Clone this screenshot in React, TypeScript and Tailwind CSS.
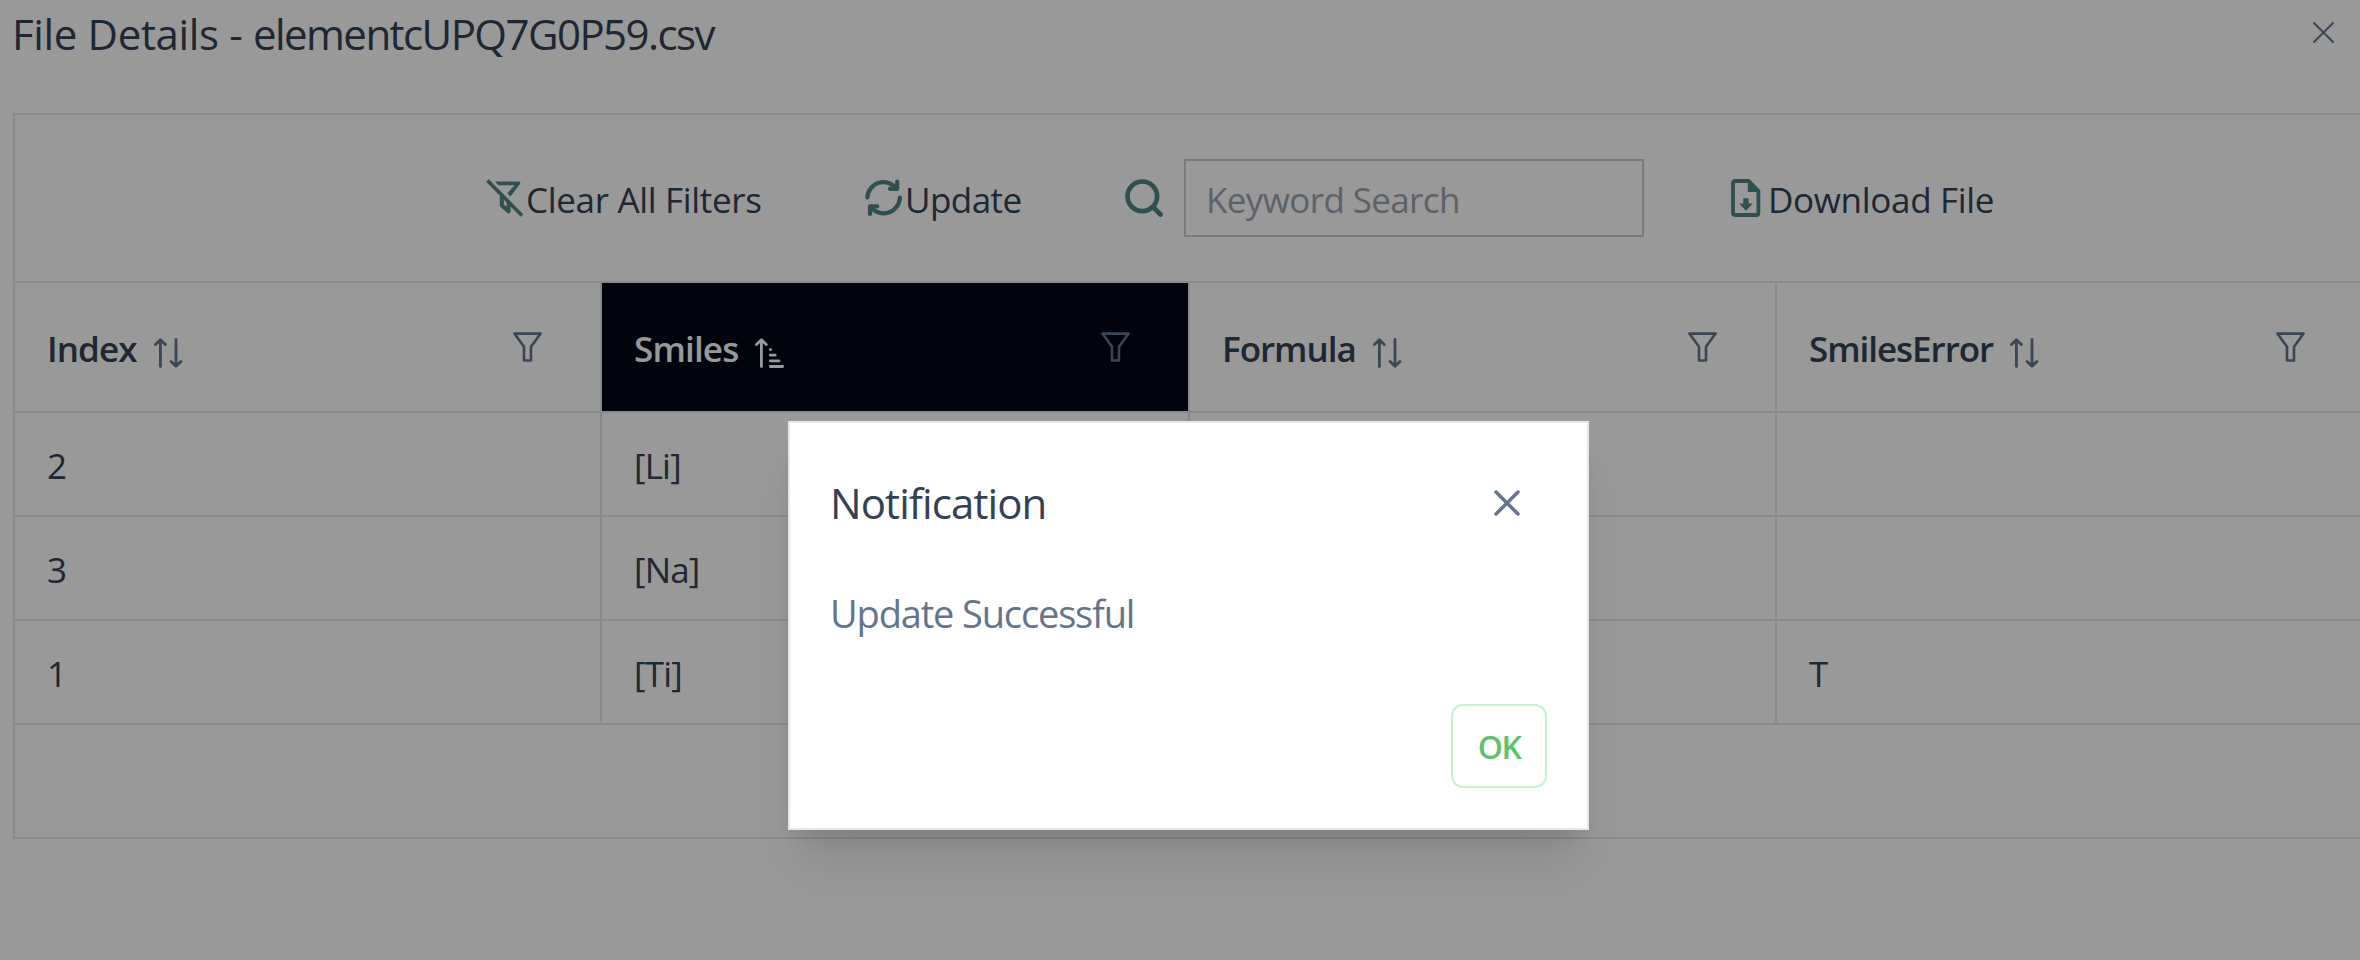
const columns = [
  { name: "Index", tracking: "tracking-[-0.9px]", sorted: false },
  { name: "Smiles", tracking: "tracking-[-0.82px]", sorted: true },
  { name: "Formula", tracking: "tracking-[-1px]", sorted: false },
  { name: "SmilesError", tracking: "tracking-[-1.04px]", sorted: false },
];

const rows = [
  ["2", "[Li]", "", ""],
  ["3", "[Na]", "", ""],
  ["1", "[Ti]", "", "T"],
];

function FilterSlashIcon() {
  return (
    <svg width="38" height="38" viewBox="0 0 38 38" fill="none" stroke="currentColor" className="shrink-0">
      <path d="M9 2.4H32.6Q35.2 2.6 34 5L24.4 17.4L21.3 14.2L28.6 6.2H12.4Z" fill="currentColor" stroke="none" />
      <path d="M15.8 17V26.3L22.6 32.5V23" strokeWidth="4" strokeLinejoin="round" />
      <path d="M1.4 1.4L36 36.6" strokeWidth="3.6" />
    </svg>
  );
}

function RefreshIcon() {
  return (
    <svg width="38" height="38" viewBox="0 0 38 38" fill="none" stroke="currentColor" strokeWidth="4.2" strokeLinecap="round" strokeLinejoin="round" className="shrink-0">
      <path d="M2.3 18.5A16.3 16.3 0 0 1 31.5 9.5" />
      <path d="M32.2 2.5V9.8H25" />
      <path d="M34.9 18.5A16.3 16.3 0 0 1 5.7 28" />
      <path d="M5 35V27.3H12.3" />
    </svg>
  );
}

function SearchIcon() {
  return (
    <svg width="38" height="38" viewBox="0 0 38 38" fill="none" stroke="currentColor" strokeWidth="4.7" strokeLinecap="round" className="shrink-0">
      <circle cx="17.3" cy="17.3" r="14.8" />
      <path d="M28 28L35.5 35.5" />
    </svg>
  );
}

function FileDownloadIcon() {
  return (
    <svg width="30" height="38" viewBox="0 0 30 38" className="shrink-0">
      <path d="M4 2H17.8L27.4 12V34Q27.4 36 25.4 36H4Q2 36 2 34V4Q2 2 4 2Z" fill="none" stroke="currentColor" strokeWidth="3.8" strokeLinejoin="round" />
      <path d="M16.8 2.5V13H28.5Z" fill="currentColor" />
      <path d="M12.3 19.3H17.6V24.6H21.8L15 31.8L8.2 24.6H12.3Z" fill="currentColor" />
    </svg>
  );
}

function SortIcon() {
  return (
    <svg width="29" height="30" viewBox="0 0 29 30" fill="none" stroke="currentColor" strokeWidth="2.8" strokeLinecap="round" strokeLinejoin="round" className="shrink-0">
      <path d="M6.4 28.6V1.8M1.5 6.6L6.4 1.8L11.3 6.6" />
      <path d="M22 1.4V28.2M17.1 23.4L22 28.2L26.9 23.4" />
    </svg>
  );
}

function SortAscendingIcon() {
  return (
    <svg width="29" height="30" viewBox="0 0 29 30" fill="none" stroke="currentColor" strokeWidth="2.8" strokeLinecap="round" strokeLinejoin="round" className="shrink-0">
      <path d="M6.4 28.6V1.8M1.5 6.6L6.4 1.8L11.3 6.6" />
      <path d="M15.3 11.6H15.7M15.3 17.2H20.2M15.3 22.9H24M15.3 28.5H27.6" />
    </svg>
  );
}

function FilterIcon() {
  return (
    <svg width="29" height="30" viewBox="0 0 29 30" fill="none" stroke="currentColor" strokeWidth="2.6" strokeLinejoin="round" className="shrink-0">
      <path d="M1.4 1.6H27.6L18 14.8V28.5H11V14.8Z" />
    </svg>
  );
}

export default function App() {
  return (
    <div className="relative h-[960px] w-full overflow-hidden bg-white font-['Open_Sans',sans-serif] text-[35px] text-[#334155]">
      <header className="flex h-[113px] items-start justify-between pl-[12px] pr-[26px] pt-[10px]">
        <h1 className="whitespace-pre text-[42px] leading-[48px]">
          <span className="tracking-[-0.36px]">File Details - </span>
          <span className="tracking-[-1.55px]">elementcUPQ7G0P59.csv</span>
        </h1>
        <button aria-label="Close" className="mt-3 text-[#64748b]">
          <svg width="21" height="21" viewBox="0 0 21 21" fill="none" stroke="currentColor" strokeWidth="1.9" strokeLinecap="round">
            <path d="M1 1L20 20M20 1L1 20" />
          </svg>
        </button>
      </header>

      <main className="ml-[13px] w-[2352px] border-t-2 border-[#e2e8f0]">
        <div className="flex h-[168px] items-center border-b-2 border-l-2 border-[#e2e8f0] pl-[471px]">
          <button className="flex w-[379px] items-center gap-[2px]">
            <span className="text-[#508484]"><FilterSlashIcon /></span>
            <span className="whitespace-nowrap pt-[3px] leading-[48px] tracking-[-0.32px]">Clear All Filters</span>
          </button>
          <button className="flex w-[260px] items-center gap-[2px]">
            <span className="text-[#508484]"><RefreshIcon /></span>
            <span className="pt-[3px] leading-[48px] tracking-[-0.55px]">Update</span>
          </button>
          <div className="flex w-[606px] items-center gap-[21px]">
            <span className="text-[#508484]"><SearchIcon /></span>
            <input
              placeholder="Keyword Search"
              className="h-[78px] w-[460px] border-2 border-[#cbcbcb] pl-[20px] pt-[3px] tracking-[-0.62px] placeholder:text-[#9ca3af]"
            />
          </div>
          <button className="flex items-center gap-[7px]">
            <span className="text-[#508484]"><FileDownloadIcon /></span>
            <span className="pt-[3px] leading-[48px] tracking-[-0.32px]">Download File</span>
          </button>
        </div>

        <div className="grid h-[130px] grid-cols-[587px_588px_587px_588px] border-b-2 border-[#e2e8f0]">
          {columns.map((c) => (
            <div
              key={c.name}
              className={`flex items-center border-l-2 border-[#e2e8f0] pl-8 pr-[58px] font-semibold ${c.sorted ? "bg-[#020617] text-white" : ""}`}
            >
              <span className={`pt-[3px] leading-[48px] ${c.tracking}`}>{c.name}</span>
              <span className={`ml-[17px] pt-[12px] ${c.sorted ? "text-white" : "text-[#64748b]"}`}>
                {c.sorted ? <SortAscendingIcon /> : <SortIcon />}
              </span>
              <span className="ml-auto text-[#64748b]"><FilterIcon /></span>
            </div>
          ))}
        </div>

        {rows.map((row) => (
          <div key={row[0]} className="grid h-[104px] grid-cols-[587px_588px_587px_588px] border-b-2 border-[#e2e8f0]">
            {row.map((cell, i) => (
              <div key={i} className="flex items-center border-l-2 border-[#e2e8f0] pl-8 pt-[4px] tracking-[-0.8px]">
                {cell}
              </div>
            ))}
          </div>
        ))}

        <div className="h-[114px] border-b-2 border-l-2 border-[#e2e8f0]" />
      </main>

      <div className="absolute inset-0 bg-black/40">
        <section
          role="dialog"
          className="absolute left-[788px] top-[421px] flex h-[409px] w-[801px] flex-col border-2 border-[#e2e8f0] bg-white pl-10 pr-10 shadow-[0_40px_50px_-10px_rgba(0,0,0,0.1),0_16px_20px_-12px_rgba(0,0,0,0.1)]"
        >
          <div className="flex items-center justify-between pr-[27px] pt-[56px]">
            <h2 className="text-[42px] leading-[48px] tracking-[-0.9px]">Notification</h2>
            <button aria-label="Close" className="text-[#64748b]">
              <svg width="26" height="26" viewBox="0 0 26 26" fill="none" stroke="currentColor" strokeWidth="3.5" strokeLinecap="round">
                <path d="M2 2L24 24M24 2L2 24" />
              </svg>
            </button>
          </div>
          <p className="mt-[62px] text-[38px] leading-[48px] tracking-[-1.15px] text-[#64748b]">Update Successful</p>
          <button className="ml-auto mt-[67px] h-[84px] w-[96px] rounded-[12px] border-2 border-[#c4f2d2] pt-[2px] text-[32px] font-semibold tracking-[-1.5px] text-[#5ec269]">
            OK
          </button>
        </section>
      </div>
    </div>
  );
}
